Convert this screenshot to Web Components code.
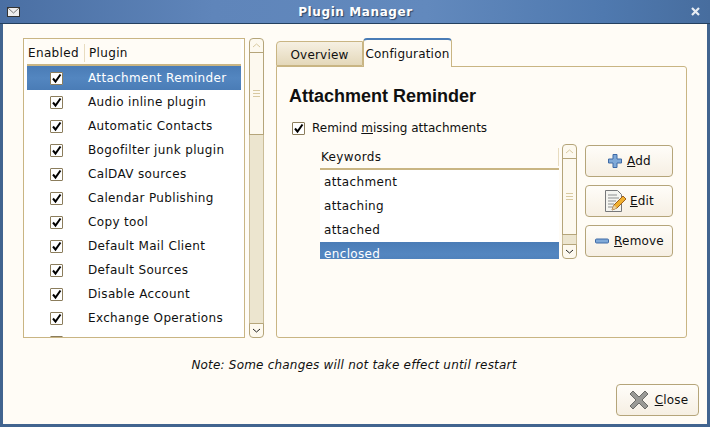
<!DOCTYPE html>
<html>
<head>
<meta charset="utf-8">
<title>Plugin Manager</title>
<style>
  html, body { margin: 0; padding: 0; background: #fffcf6; }
  body { font: 12px "DejaVu Sans", sans-serif; color: #101010; width: 710px; height: 427px; overflow: hidden; }
</style>
</head>
<body>
<plugin-window wintitle="Plugin Manager">
  <div slot="main" style="display:flex;gap:12px;height:300px">
    <div style="display:flex;gap:4px;flex:none">
      <tree-list style="width:222px" boxed columns="Enabled|Plugin" check selected="0"
        items="Attachment Reminder|Audio inline plugin|Automatic Contacts|Bogofilter junk plugin|CalDAV sources|Calendar Publishing|Copy tool|Default Mail Client|Default Sources|Disable Account|Exchange Operations|Face"></tree-list>
      <scroll-bar thumb="83" gap="188"></scroll-bar>
    </div>
    <tab-book first="Overview" second="Configuration">
      <h2 style="margin:0;font:bold 18px 'Liberation Sans',sans-serif;line-height:22px">Attachment Reminder</h2>
      <div style="display:flex;align-items:center;gap:7px;margin:13px 0 0 3px;height:16px">
        <check-mark></check-mark><span>Remind <u>m</u>issing attachments</span>
      </div>
      <div style="display:flex;margin:8px 0 0 31px;height:115px">
        <tree-list style="width:239px" columns="Keywords" selected="3"
          items="attachment|attaching|attached|enclosed"></tree-list>
        <scroll-bar style="margin-left:3px" thumb="77" gap="9"></scroll-bar>
        <div style="display:flex;flex-direction:column;gap:8px;margin:1px 0 0 8px">
          <push-button style="width:88px"><svg slot="icon" width="16" height="16" viewBox="0 0 16 16"><path d="M6 1.5h4v4.5h4.500v4H10v4.500H6V10H1.500V6H6z" fill="#7fa9d8" stroke="#3e6aa6"/></svg><span><u>A</u>dd</span></push-button>
          <push-button style="width:88px"><svg slot="icon" width="22" height="24" viewBox="0 0 22 24"><path d="M1.500 1.500h12l4 4v17h-16z" fill="#f4f4f0" stroke="#77787a"/><path d="M4 6h9M4 9h11M4 12h8M4 15h6M4 18h6" stroke="#8d8f90"/><path d="M8 21l2-5 9-9 3 3-9 9z" fill="#f0b030" stroke="#a0601c"/><path d="M8 21l2-5 3 3z" fill="#e8d0a0"/></svg><span><u>E</u>dit</span></push-button>
          <push-button style="width:88px"><svg slot="icon" width="16" height="6" viewBox="0 0 16 6"><rect x="1.500" y="1" width="13" height="4" rx="1" fill="#7fa9d8" stroke="#3e6aa6"/></svg><span><u>R</u>emove</span></push-button>
        </div>
      </div>
    </tab-book>
  </div>
  <div slot="note" style="font-style:italic">Note: Some changes will not take effect until restart</div>
  <push-button slot="actions" style="width:83px"><svg slot="icon" width="24" height="24" viewBox="0 0 24 24"><path d="M3 6l3-3 6 6 6-6 3 3-6 6 6 6-3 3-6-6-6 6-3-3 6-6z" fill="#9a9a96" stroke="#6c6c68"/></svg><span><u>C</u>lose</span></push-button>
</plugin-window>

<script>
// check box, the tick is a path
class CheckMark extends HTMLElement {
  constructor() {
    super();
    this.attachShadow({mode: 'open'});
    this.shadowRoot.innerHTML = `
      <style>
        :host { display: block; width: 13px; height: 13px; flex: none; box-sizing: border-box;
          border: 1px solid #8b7d5c; border-radius: 1px; background: #fff; }
        svg { display: block; }
      </style>
      <svg width="11" height="11" viewBox="0 0 11 11"><path d="M2 5.500l2.500 3L9.500 1.500" fill="none" stroke="#000" stroke-width="2"/></svg>`;
  }
}
customElements.define('check-mark', CheckMark);

class ScrollBar extends HTMLElement {
  static get observedAttributes() { return ['thumb', 'gap']; }
  constructor() {
    super();
    this.attachShadow({mode: 'open'});
  }
  connectedCallback() { this.render(); }
  attributeChangedCallback() { this.render(); }
  render() {
    const thumb = this.getAttribute('thumb') || 40;
    this.shadowRoot.innerHTML = `
      <style>
        :host { display: flex; flex-direction: column; width: 15px; flex: none; box-sizing: border-box; }
        div { box-sizing: border-box; border: 1px solid #b5a57a; background: #fdf9ef; }
        .up { height: 15px; border-radius: 4px 4px 0 0; display: flex; align-items: center; justify-content: center; }
        .down { height: 15px; border-radius: 0 0 4px 4px; display: flex; align-items: center; justify-content: center; margin-top: -1px; }
        .thumb { height: ${thumb}px; margin-top: -1px; display: flex; flex-direction: column; align-items: center; justify-content: center; gap: 2px; }
        .thumb i { display: block; width: 7px; height: 1px; background: #d8c9a0; }
        .trough { flex: 1; border-width: 0 1px; background: #ece5cf; border-color: #cbbd97; }
      </style>
      <div class="up"><svg width="9" height="5" viewBox="0 0 9 5"><path d="M1 4l3.500-3L8 4" fill="none" stroke="#d8c9a0"/></svg></div>
      <div class="thumb"><i></i><i></i><i></i></div>
      <div class="trough"></div>
      <div class="down"><svg width="9" height="5" viewBox="0 0 9 5"><path d="M1 1l3.500 3L8 1" fill="none" stroke="#222"/></svg></div>`;
  }
}
customElements.define('scroll-bar', ScrollBar);

class PushButton extends HTMLElement {
  constructor() {
    super();
    this.attachShadow({mode: 'open'});
    this.shadowRoot.innerHTML = `
      <style>
        :host { display: flex; align-items: center; justify-content: center; gap: 4px; height: 32px; box-sizing: border-box;
          border: 1px solid #b5a57a; border-radius: 4px; background: linear-gradient(#fffdf9, #f6efe3); letter-spacing: .2px; }
      </style>
      <slot name="icon"></slot><slot></slot>`;
  }
}
customElements.define('push-button', PushButton);

class TreeList extends HTMLElement {
  constructor() {
    super();
    this.attachShadow({mode: 'open'});
  }
  connectedCallback() {
    const cols = this.getAttribute('columns').split('|');
    const items = this.getAttribute('items').split('|');
    const sel = +this.getAttribute('selected');
    const check = this.hasAttribute('check');
    const head = cols.map(c => `<span class="col">${c}</span>`).join('');
    const rows = items.map((t, i) => `
      <div class="row${i === sel ? ' sel' : ''}">
        ${check ? '<check-mark></check-mark>' : ''}<span class="txt">${t}</span>
      </div>`).join('');
    this.shadowRoot.innerHTML = `
      <style>
        :host { display: flex; flex-direction: column; flex: none; box-sizing: border-box; overflow: hidden; background: #fff; }
        :host([boxed]) { border: 1px solid #c9b583; padding: 0 3px 0 3px; }
        .head { display: flex; align-items: center; flex: none; height: 27px; background: #fffcf6;
          border-bottom: 2px solid #c9b583; box-sizing: border-box; margin: 0 0 0 0; padding-top: 2px; }
        .col { padding: 0 5px 0 1px; margin-left: 0; letter-spacing: .35px; border-right: 1px solid #e8dcc0; line-height: 18px; }
        .col + .col { border-right: 0; padding-left: 4px; }
        .rows { flex: 1; overflow: hidden; }
        .row { display: flex; align-items: center; height: 24px; letter-spacing: .35px; }
        .row check-mark { margin-left: 23px; margin-right: 25px; }
        .sel { background: linear-gradient(#4a7cb6, #5386c0 50%, #4a7cb6); color: #fff; }
      </style>
      <div class="head">${head}</div>
      <div class="rows">${rows}</div>`;
    if (!check) {
      const style = document.createElement('style');
      style.textContent = `
        .head { height: 26px; border-bottom-width: 2px; padding-left: 1px; }
        .col { flex: 1; padding-left: 0; }
        .row { padding-left: 4px; }`;
      this.shadowRoot.appendChild(style);
    }
  }
}
customElements.define('tree-list', TreeList);

class TabBook extends HTMLElement {
  constructor() {
    super();
    this.attachShadow({mode: 'open'});
  }
  connectedCallback() {
    this.shadowRoot.innerHTML = `
      <style>
        :host { display: flex; flex-direction: column; width: 411px; flex: none; }
        .tabs { display: flex; align-items: flex-end; height: 28px; flex: none; position: relative; z-index: 1; }
        .tab { box-sizing: border-box; display: flex; align-items: center; justify-content: center; letter-spacing: .2px; }
        .off { width: 87px; height: 25px; border: 1px solid #c9b583; border-radius: 4px 0 0 0; padding-top: 3px;
          background: linear-gradient(#f6f0e2, #e4d8ba); }
        .on { width: 89px; height: 29px; margin-bottom: -1px; background: #fffcf6; border: 1px solid #c9b583; border-top: 2px solid #4a7cb6;
          border-bottom: 0; border-radius: 4px 4px 0 0; }
        .page { flex: 1; box-sizing: border-box; border: 1px solid #c9b583; border-radius: 0 3px 3px 3px; padding: 18px 12px; }
      </style>
      <div class="tabs">
        <div class="tab off">${this.getAttribute('first')}</div>
        <div class="tab on">${this.getAttribute('second')}</div>
      </div>
      <div class="page"><slot></slot></div>`;
  }
}
customElements.define('tab-book', TabBook);

class PluginWindow extends HTMLElement {
  constructor() {
    super();
    this.attachShadow({mode: 'open'});
  }
  connectedCallback() {
    this.shadowRoot.innerHTML = `
      <style>
        :host { display: flex; flex-direction: column; width: 710px; height: 427px; box-sizing: border-box;
          background: #41648f; border-radius: 4px 4px 0 0; }
        .bar { display: flex; align-items: center; justify-content: space-between; height: 24px; flex: none; padding: 0 10px 0 7px;
          background: linear-gradient(90deg, #4a6fa3, #5f85ba 30%, #6289bd 60%, #4f79af 85%, #476d9e);
          border-bottom: 1px solid #24405f; box-sizing: border-box; }
        .name { color: #fff; font-weight: bold; letter-spacing: .6px; text-shadow: 1px 1px 1px #2c4465; }
        .client { flex: 1; display: flex; flex-direction: column; background: #fffcf6; margin: 0 3px 3px; padding: 14px 8px 8px 20px; min-height: 0; }
        .main { padding-right: 12px; }
        .note { text-align: center; margin-top: 20px; height: 14px; line-height: 14px; letter-spacing: .2px; padding-right: 14px; }
        .actions { margin-top: auto; display: flex; justify-content: flex-end; }
      </style>
      <div class="bar">
        <svg width="13" height="10" viewBox="0 0 13 10"><rect x=".5" y=".5" width="12" height="9" fill="#eee" stroke="#333"/><path d="M1 1l5.500 5L12 1" fill="none" stroke="#777"/></svg>
        <span class="name">${this.getAttribute('wintitle')}</span>
        <svg width="9" height="9" viewBox="0 0 9 9"><path d="M1 1l7 7M8 1L1 8" stroke="#e8edf3" stroke-width="2.200"/></svg>
      </div>
      <div class="client">
        <div class="main"><slot name="main"></slot></div>
        <div class="note"><slot name="note"></slot></div>
        <div class="actions"><slot name="actions"></slot></div>
      </div>`;
  }
}
customElements.define('plugin-window', PluginWindow);
</script>
</body>
</html>
